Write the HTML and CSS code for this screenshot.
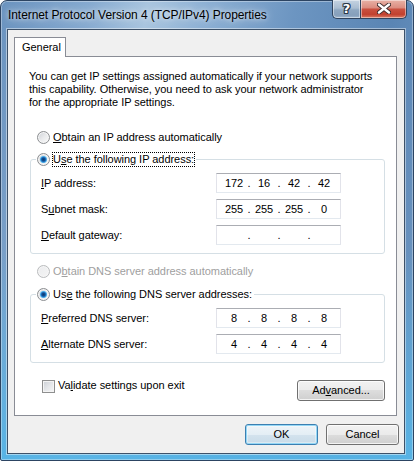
FILE: index.html
```html
<!DOCTYPE html>
<html>
<head>
<meta charset="utf-8">
<title>Internet Protocol Version 4 (TCP/IPv4) Properties</title>
<link rel="stylesheet" href="styles.css">
</head>
<body>
<div class="window">
  <div class="titlebar">
    <div class="title">Internet Protocol Version 4 (TCP/IPv4) Properties</div>
    <div class="caption-buttons">
      <div class="cap-btn help"><span>?</span></div>
      <div class="cap-btn close">
        <svg width="14" height="11" viewBox="0 0 14 11">
          <path d="M2 1.5 L12 9.5 M12 1.5 L2 9.5" stroke="#3b2a2a" stroke-width="4.2" stroke-linecap="round" fill="none"/>
          <path d="M2 1.5 L12 9.5 M12 1.5 L2 9.5" stroke="#ffffff" stroke-width="2.4" stroke-linecap="round" fill="none"/>
        </svg>
      </div>
    </div>
  </div>
  <div class="client">
    <div class="tabs"><div class="tab">General</div></div>
    <div class="panel">
      <p class="desc">You can get IP settings assigned automatically if your network supports<br>this capability. Otherwise, you need to ask your network administrator<br>for the appropriate IP settings.</p>
      <div class="option"><span class="radio"></span><span class="label"><u>O</u>btain an IP address automatically</span></div>
      <fieldset class="group">
        <legend class="option"><span class="radio checked"></span><span class="label focus">U<u>s</u>e the following IP address:</span></legend>
        <div class="field"><span class="flabel"><u>I</u>P address:</span><div class="ipbox"><span>172</span><i>.</i><span>16</span><i>.</i><span>42</span><i>.</i><span>42</span></div></div>
        <div class="field"><span class="flabel">S<u>u</u>bnet mask:</span><div class="ipbox"><span>255</span><i>.</i><span>255</span><i>.</i><span>255</span><i>.</i><span>0</span></div></div>
        <div class="field"><span class="flabel"><u>D</u>efault gateway:</span><div class="ipbox"><span></span><i>.</i><span></span><i>.</i><span></span><i>.</i><span></span></div></div>
      </fieldset>
      <div class="option option-dns disabled"><span class="radio"></span><span class="label">O<u>b</u>tain DNS server address automatically</span></div>
      <fieldset class="group group-dns">
        <legend class="option"><span class="radio checked"></span><span class="label">Us<u>e</u> the following DNS server addresses:</span></legend>
        <div class="field"><span class="flabel"><u>P</u>referred DNS server:</span><div class="ipbox"><span>8</span><i>.</i><span>8</span><i>.</i><span>8</span><i>.</i><span>8</span></div></div>
        <div class="field"><span class="flabel"><u>A</u>lternate DNS server:</span><div class="ipbox"><span>4</span><i>.</i><span>4</span><i>.</i><span>4</span><i>.</i><span>4</span></div></div>
      </fieldset>
      <div class="bottom-row">
        <div class="check-row"><span class="checkbox"></span><span class="label">Va<u>l</u>idate settings upon exit</span></div>
        <button class="btn advanced">Ad<u>v</u>anced...</button>
      </div>
    </div>
    <div class="buttons">
      <button class="btn default">OK</button>
      <button class="btn">Cancel</button>
    </div>
  </div>
</div>
</body>
</html>
```

FILE: styles.css
```css
html, body {
  margin: 0;
  padding: 0;
  background: #ffffff;
}

body {
  width: 414px;
  height: 461px;
  overflow: hidden;
  font-family: "Liberation Sans", Arial, sans-serif;
  font-size: 11px;
  letter-spacing: -0.04px;
  color: #000;
}

.window {
  box-sizing: border-box;
  width: 414px;
  height: 461px;
  border: 1px solid #2c4462;
  border-radius: 7px 7px 2px 2px;
  display: flex;
  flex-direction: column;
  background:
    linear-gradient(to bottom, rgba(90, 185, 235, 0) 0%, rgba(90, 185, 235, 0) 55%, rgba(85, 180, 230, 0.95) 100%),
    linear-gradient(100deg, #6a93bf 0%, #86aad0 18%, #a9c5df 30%, #8db0d4 42%, #6c95c1 60%, #5a85b4 80%, #7099c4 100%);
  box-shadow: inset 0 0 0 1px rgba(255, 255, 255, 0.35);
}

.titlebar {
  height: 28px;
  flex: none;
  display: flex;
  align-items: flex-start;
  padding-left: 7px;
}

.title {
  margin-top: 6px;
  font-size: 12px;
  letter-spacing: -0.07px;
  line-height: 16px;
  white-space: nowrap;
  color: #000;
  text-shadow: 0 0 8px rgba(255, 255, 255, 0.85), 0 0 4px rgba(255, 255, 255, 0.6);
}

.caption-buttons {
  margin-left: auto;
  margin-right: 6px;
  margin-top: -1px;
  display: flex;
}

.cap-btn {
  box-sizing: border-box;
  height: 19px;
  border: 1px solid #30445e;
  border-top: none;
  display: flex;
  align-items: center;
  justify-content: center;
  box-shadow: inset 0 0 0 1px rgba(255, 255, 255, 0.45);
}

.help {
  width: 28px;
  border-right: none;
  border-radius: 0 0 0 5px;
  background: linear-gradient(to bottom, #c5d3e2 0%, #aabdd1 45%, #8ea7c1 55%, #869fbb 85%, #a3b9d0 100%);
}

.help span {
  font-family: "DejaVu Sans", sans-serif;
  font-weight: bold;
  font-size: 13px;
  line-height: 13px;
  color: #fff;
  margin-top: -1px;
  text-shadow: -1px 0 0 #2b3848, 1px 0 0 #2b3848, 0 -1px 0 #2b3848, 0 1px 0 #2b3848, 1px 1px 0 #2b3848, -1px -1px 0 #2b3848, 1px -1px 0 #2b3848, -1px 1px 0 #2b3848;
}

.close {
  width: 47px;
  border-radius: 0 0 5px 0;
  background: linear-gradient(to bottom, #e8b2a6 0%, #dc8e81 42%, #c9503f 52%, #c2412f 80%, #d97a63 100%);
}

.close svg {
  display: block;
  margin-top: -1px;
}

.client {
  flex: 1;
  margin: 0 8px 6px 6px;
  border: 1px solid #3d5168;
  background: #f0f0f0;
  display: flex;
  flex-direction: column;
  box-shadow: 0 0 0 1px rgba(255, 255, 255, 0.45);
}

.tabs {
  display: flex;
  margin: 7px 0 0 6px;
}

.tab {
  position: relative;
  z-index: 1;
  box-sizing: border-box;
  width: 52px;
  height: 20px;
  border: 1px solid #898c95;
  border-bottom: none;
  background: #fff;
  padding-left: 7px;
  line-height: 18px;
  white-space: nowrap;
}

.panel {
  flex: 1;
  margin: -1px 7px 0 6px;
  border: 1px solid #898c95;
  background: #fff;
  padding: 13px 0 0 15px;
}

.desc {
  margin: 0 0 0 -1px;
  line-height: 13px;
  white-space: nowrap;
}

.option {
  display: flex;
  align-items: flex-start;
  margin: 21px 0 0 7px;
  white-space: nowrap;
}

.label {
  border: 1px solid transparent;
  line-height: 13px;
  margin-left: 2px;
}

.label.focus {
  border: 1px dotted #000;
}

.radio {
  flex: none;
  box-sizing: border-box;
  width: 13px;
  height: 13px;
  margin-top: 1px;
  border-radius: 50%;
  border: 1px solid #8c8e91;
  background: linear-gradient(135deg, #cdd1d6 0%, #e9eaec 50%, #fbfbfb 100%);
  box-shadow: inset 0 0 0 1px #f6f6f6;
}

.radio.checked {
  background:
    radial-gradient(circle at 50% 50%, #0b3a70 0, #134f92 1.6px, #2c86d4 2.6px, #6fcaf4 3.4px, rgba(111, 202, 244, 0) 3.9px),
    linear-gradient(135deg, #cdd1d6 0%, #e9eaec 50%, #fbfbfb 100%);
}

.disabled {
  color: #a0a0a0;
}

.disabled .radio {
  border-color: #b9bbbd;
  background: linear-gradient(135deg, #ebecee 0%, #f4f4f4 100%);
}

.group {
  box-sizing: border-box;
  width: 355px;
  margin: 7px 0 0 0;
  padding: 6px 0 8px 5px;
  border: 1px solid #d5dfe5;
  border-radius: 3px;
  min-inline-size: 0;
}

.group legend.option {
  margin: 0;
  padding: 0 1px;
}

.field {
  display: grid;
  grid-template-columns: 175px 125px;
  height: 20px;
  margin-left: 5px;
}

.field + .field {
  margin-top: 6px;
}

.flabel {
  line-height: 20px;
  white-space: nowrap;
}

.ipbox {
  box-sizing: border-box;
  height: 20px;
  border: 1px solid #e2e3ea;
  border-top-color: #abadb3;
  border-bottom-color: #e3e9ef;
  background: #fff;
  padding: 1px 0 0 5px;
  display: grid;
  grid-template-columns: 24px 6px 24px 6px 24px 6px 24px;
  line-height: 17px;
}

.ipbox span,
.ipbox i {
  font-style: normal;
  text-align: center;
}

.option-dns {
  margin-top: 10px;
}

.group-dns {
  margin-top: 8px;
}

.bottom-row {
  width: 355px;
  margin-top: 16px;
  display: flex;
  justify-content: space-between;
  align-items: flex-start;
}

.check-row {
  display: flex;
  align-items: flex-start;
  margin-left: 12px;
  white-space: nowrap;
}

.check-row .label {
  border: none;
  margin-left: 3px;
}

.checkbox {
  flex: none;
  box-sizing: border-box;
  width: 13px;
  height: 13px;
  margin-top: 1px;
  border: 1px solid #8e8f8f;
  background: linear-gradient(135deg, #cbcfd5 0%, #e4e6e9 50%, #f6f6f6 100%);
  box-shadow: inset 0 0 0 1px #f4f4f4;
}

.btn {
  box-sizing: border-box;
  width: 73px;
  height: 21px;
  padding: 0;
  font-family: "Liberation Sans", Arial, sans-serif;
  font-size: 11px;
  letter-spacing: -0.04px;
  line-height: 19px;
  color: #000;
  border: 1px solid #707070;
  border-radius: 3px;
  background: linear-gradient(to bottom, #f2f2f2 0%, #ebebeb 50%, #dddddd 50%, #cfcfcf 100%);
  box-shadow: inset 0 0 0 1px rgba(255, 255, 255, 0.75);
}

.advanced {
  width: 88px;
  margin-top: 1px;
}

.default {
  border-color: #3c7fb1;
  background: linear-gradient(to bottom, #eef4f8 0%, #e4eef5 50%, #d4e3ee 50%, #c8dbe8 100%);
  box-shadow: inset 0 0 0 1px #94d7f6, inset 0 0 0 2px rgba(255, 255, 255, 0.35);
}

.buttons {
  flex: none;
  display: flex;
  justify-content: flex-end;
  gap: 8px;
  padding: 8px 5px 8px 0;
}
```
